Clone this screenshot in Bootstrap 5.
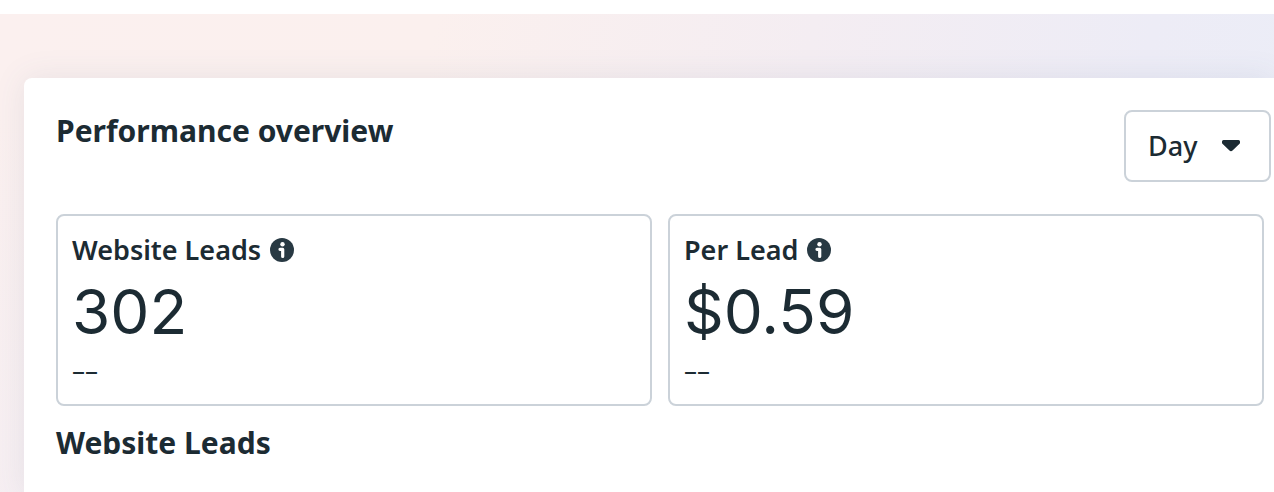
<!DOCTYPE html>
<html lang="en">
<head>
<meta charset="utf-8">
<meta name="viewport" content="width=device-width, initial-scale=1">
<title>Performance overview</title>
<link href="https://cdn.jsdelivr.net/npm/bootstrap@5.3.0/dist/css/bootstrap.min.css" rel="stylesheet">
<style>
  :root { --ink: #1c2b33; --line: #cbd2d9; }
  body { font-family: "Noto Sans", sans-serif; color: var(--ink); overflow-x: hidden; }
  .top-strip { height: 14px; }
  .backdrop {
    padding: 64px 0 0 24px;
    background:
      linear-gradient(180deg, rgba(240, 236, 246, 0) 20%, rgba(242, 238, 246, .5) 100%),
      linear-gradient(100deg, #fbf0ef 0%, #fbf0ee 32%, #f4edf2 60%, #edecf6 85%, #ebedf7 100%);
  }
  .overview { padding: 32px 0 32px 32px; border-radius: 8px 0 0 0; box-shadow: 0 0 32px rgba(70, 100, 130, .1); }
  .overview-head { padding-right: 3px; margin-bottom: 32px; }
  .section-title { font-size: 30px; line-height: 42px; font-weight: 700; }
  .period {
    width: 147px; height: 72px; padding: 0 22px; font-size: 27px; font-weight: 500;
    color: var(--ink); border: 2px solid var(--line); border-radius: 8px;
    background: #fff url("data:image/svg+xml,%3Csvg xmlns='http://www.w3.org/2000/svg' viewBox='0 0 18 12'%3E%3Cpath fill='%231c2b33' d='M1.500 0h15Q18 0 18 1.500V2.400Q18 3.400 17.300 4L10.800 10.300Q9 12 7.200 10.300L.700 4Q0 3.400 0 2.400V1.500Q0 0 1.500 0Z'/%3E%3C/svg%3E") no-repeat right 29px center / 18px 12px;
  }
  .metrics { gap: 16px; padding-right: 10px; margin-bottom: 16px; }
  .metric { min-height: 192px; padding: 14px; border: 2px solid var(--line); border-radius: 8px; }
  .metric-label { font-size: 27px; line-height: 40px; font-weight: 600; gap: 9px; }
  .metric-value { font-family: Inter, "Noto Sans", sans-serif; font-size: 62px; line-height: 84px; font-weight: 400; }
  .metric-change { font-size: 26px; line-height: 32px; }
</style>
</head>
<body>
<div class="top-strip bg-white"></div>
<main class="backdrop">
  <section class="overview bg-white">
    <header class="overview-head d-flex justify-content-between align-items-start">
      <h1 class="section-title mb-0">Performance overview</h1>
      <select class="form-select period" aria-label="Period">
        <option selected>Day</option><option>Week</option><option>Month</option>
      </select>
    </header>
    <div class="metrics d-flex">
      <article class="metric flex-fill w-50">
        <div class="metric-label d-flex align-items-center">Website Leads
          <svg width="24" height="24" viewBox="0 0 24 24" aria-hidden="true"><circle cx="12" cy="12" r="12" fill="#283943"/><circle cx="12.500" cy="6.300" r="2.200" fill="#fff"/><path d="M10 11.300h2.700v7.200" fill="none" stroke="#fff" stroke-width="3.200" stroke-linecap="round" stroke-linejoin="round"/></svg>
        </div>
        <div class="metric-value">302</div>
        <div class="metric-change">––</div>
      </article>
      <article class="metric flex-fill w-50">
        <div class="metric-label d-flex align-items-center">Per Lead
          <svg width="24" height="24" viewBox="0 0 24 24" aria-hidden="true"><circle cx="12" cy="12" r="12" fill="#283943"/><circle cx="12.500" cy="6.300" r="2.200" fill="#fff"/><path d="M10 11.300h2.700v7.200" fill="none" stroke="#fff" stroke-width="3.200" stroke-linecap="round" stroke-linejoin="round"/></svg>
        </div>
        <div class="metric-value">$0.59</div>
        <div class="metric-change">––</div>
      </article>
    </div>
    <h2 class="section-title mb-0">Website Leads</h2>
  </section>
</main>
<script src="https://cdn.jsdelivr.net/npm/bootstrap@5.3.0/dist/js/bootstrap.bundle.min.js"></script>
</body>
</html>
